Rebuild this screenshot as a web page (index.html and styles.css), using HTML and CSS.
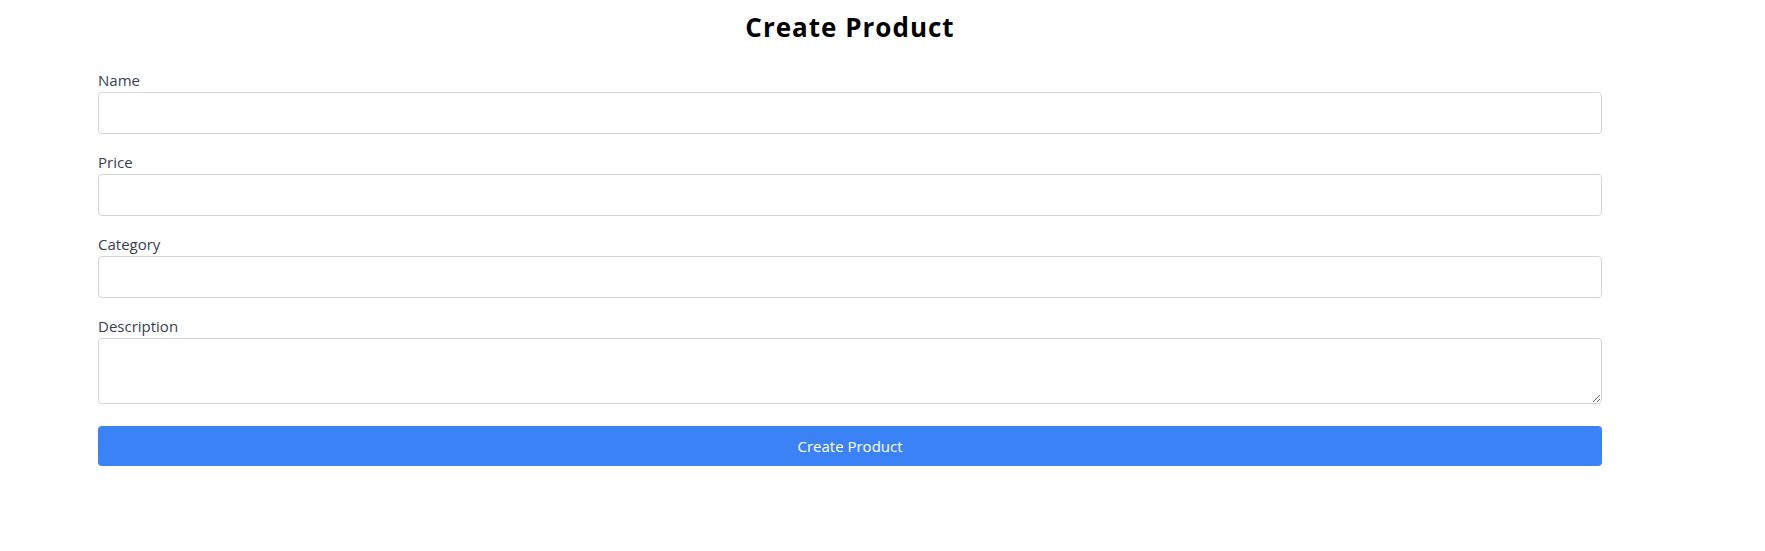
FILE: index.html
```html
<!DOCTYPE html>
<html lang="en">
<head>
<meta charset="utf-8">
<title>Create Product</title>
<link rel="stylesheet" href="styles.css">
</head>
<body>
<div class="page">
  <h1 class="title">Create Product</h1>
  <form class="form">
    <div class="field">
      <label class="label" for="name">Name</label>
      <input class="input" id="name" type="text">
    </div>
    <div class="field">
      <label class="label" for="price">Price</label>
      <input class="input" id="price" type="text">
    </div>
    <div class="field">
      <label class="label" for="category">Category</label>
      <input class="input" id="category" type="text">
    </div>
    <div class="field field-last">
      <label class="label" for="description">Description</label>
      <textarea class="textarea" id="description"></textarea>
    </div>
    <button class="button" type="button">Create Product</button>
  </form>
</div>
</body>
</html>
```
FILE: styles.css
```css
* { box-sizing: border-box; }
html, body { margin: 0; padding: 0; background: #fff; }
body {
  font-family: "Open Sans", "Noto Sans", sans-serif;
  color: #000;
}
.page {
  width: 1504px;
  margin-left: 98px;
  padding-top: 11px;
}
.title {
  margin: 0 0 25px;
  text-align: center;
  font-size: 26px;
  letter-spacing: 1px;
  line-height: 32px;
  font-weight: 700;
}
.form { display: flex; flex-direction: column; }
.field { display: flex; flex-direction: column; margin-bottom: 16px; }
.field-last { margin-bottom: 22px; }
.label {
  font-size: 15px;
  line-height: 24px;
  color: #374151;
}
.input, .textarea {
  display: block;
  width: 100%;
  border: 1px solid #d1d5db;
  border-radius: 4px;
  background: #fff;
  font: inherit;
  margin: 0;
}
.input { height: 42px; }
.textarea { height: 66px; resize: vertical; }
.button {
  display: block;
  width: 100%;
  height: 40px;
  border: 0;
  border-radius: 4px;
  background: #3b82f6;
  color: #fff;
  font-family: inherit;
  font-size: 15px;
  margin: 0;
}
```
